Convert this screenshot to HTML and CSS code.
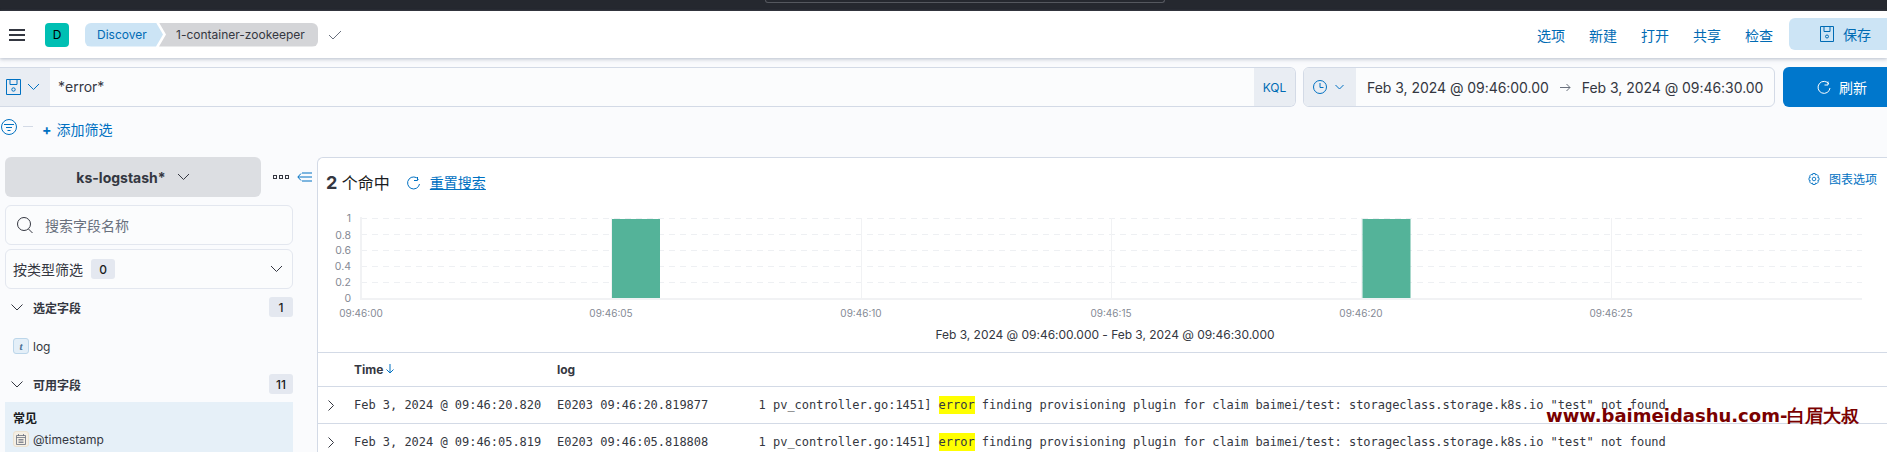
FILE: index.html
```html
<!DOCTYPE html>
<html lang="zh">
<head>
<meta charset="utf-8">
<title>Discover - Elastic</title>
<link rel="stylesheet" href="styles.css">
</head>
<body>
<div class="strip"><div class="urlbar"></div></div>
<header class="header">
  <button class="burger" aria-label="menu"><span></span><span></span><span></span></button>
  <div class="avatar">D</div>
  <nav class="crumbs">
    <span class="crumb crumb-a">Discover</span>
    <span class="crumb crumb-b">1-container-zookeeper</span>
  </nav>
  <svg class="check" width="14" height="10" viewBox="0 0 14 10"><path d="M1 5l4 4 8-8" fill="none" stroke="#69707d" stroke-width="1"/></svg>
  <div class="top-links">
    <a>选项</a><a>新建</a><a>打开</a><a>共享</a><a>检查</a>
  </div>
  <div class="save-btn">
    <svg width="14" height="16" viewBox="0 0 14 16"><g fill="none" stroke="#006bb4"><path d="M.5.5h13v15H.5z"/><path d="M4 .5v5h6v-5"/><circle cx="7" cy="10.5" r="1.5"/></g></svg>
    <span>保存</span>
  </div>
</header>

<section class="query-row">
  <div class="query">
    <div class="q-pre">
      <svg width="15" height="16" viewBox="0 0 15 16"><g fill="none" stroke="#0071c2"><path d="M.5.5h14v15H.5z"/><path d="M4 .5v5h7v-5"/><circle cx="7.500" cy="10.500" r="1.700"/></g></svg>
      <svg width="13" height="8" viewBox="0 0 13 8"><path d="M1 1l5.500 5.500L12 1" fill="none" stroke="#0071c2"/></svg>
    </div>
    <div class="q-input">*error*</div>
    <div class="q-kql">KQL</div>
  </div>
  <div class="dates">
    <div class="d-pre">
      <svg width="14" height="14" viewBox="0 0 14 14"><g fill="none" stroke="#0071c2"><circle cx="7" cy="7" r="6.500"/><path d="M7 3v4.500h3.500"/></g></svg>
      <svg width="9" height="6" viewBox="0 0 9 6"><path d="M.5 1l4 4 4-4" fill="none" stroke="#0071c2"/></svg>
    </div>
    <span class="d-text">Feb 3, 2024 @ 09:46:00.00</span>
    <svg class="d-arrow" width="11" height="9" viewBox="0 0 11 9"><path d="M0 4.500h10M6.500 1l3.500 3.500L6.500 8" fill="none" stroke="#69707d"/></svg>
    <span class="d-text">Feb 3, 2024 @ 09:46:30.00</span>
  </div>
  <div class="refresh">
    <svg width="14" height="15" viewBox="0 0 14 15"><path d="M11 1.500v3.500h-3.500M12 4A6 6 0 1 0 13 8" fill="none" stroke="#fff"/></svg>
    <span>刷新</span>
  </div>
</section>

<section class="filter-row">
  <svg class="f-icon" width="16" height="16" viewBox="0 0 16 16"><g fill="none" stroke="#0071c2"><circle cx="8" cy="8" r="7.500"/><path d="M3 5.500h10M5 8.500h6M6.500 11.500h3"/></g></svg>
  <span class="f-dash"></span>
  <a class="f-add"><b>+</b> 添加筛选</a>
</section>

<div class="content">
  <aside class="sidebar">
    <div class="index-row">
      <div class="index-btn"><span>ks-logstash*</span>
        <svg width="13" height="8" viewBox="0 0 13 8"><path d="M1 1l5.500 5.500L12 1" fill="none" stroke="#343741"/></svg>
      </div>
      <div class="dots"><i></i><i></i><i></i></div>
      <svg class="collapse" width="15" height="10" viewBox="0 0 15 10"><path d="M15 1H5M15 5H1M15 9H5M4 1.500L.8 5 4 8.500" fill="none" stroke="#0071c2"/></svg>
    </div>
    <div class="box search-box">
      <svg width="16" height="16" viewBox="0 0 16 16"><g fill="none" stroke="#343741"><circle cx="7" cy="7" r="6.500"/><path d="M11.500 12l4 4"/></g></svg>
      <span>搜索字段名称</span>
    </div>
    <div class="box type-box">
      <span>按类型筛选</span><span class="badge badge-0">0</span>
      <svg class="push" width="13" height="8" viewBox="0 0 13 8"><path d="M1 1l5.500 5.500L12 1" fill="none" stroke="#343741"/></svg>
    </div>
    <div class="group group-sel">
      <svg width="12" height="7" viewBox="0 0 12 7"><path d="M.5.500l5.500 5.500 5.500-5.500" fill="none" stroke="#343741"/></svg>
      <span class="g-title">选定字段</span><span class="badge push">1</span>
    </div>
    <div class="field field-log"><span class="ftype ftype-t">t</span><span>log</span></div>
    <div class="group group-av">
      <svg width="12" height="7" viewBox="0 0 12 7"><path d="M.5.500l5.500 5.500 5.500-5.500" fill="none" stroke="#343741"/></svg>
      <span class="g-title">可用字段</span><span class="badge push">11</span>
    </div>
    <div class="common">
      <div class="common-title">常见</div>
      <div class="field"><span class="ftype ftype-d">
        <svg width="10" height="11" viewBox="0 0 10 11"><g fill="none" stroke="#69707d" stroke-width=".8"><path d="M.5 1.500h9v9h-9zM.5 3.500h9M2.500 0v2M7.500 0v2M2.500 5.500h5M2.500 7h5M2.500 8.500h5"/></g></svg>
      </span><span>@timestamp</span></div>
    </div>
  </aside>

  <main class="main">
    <div class="hits-row">
      <span class="hits"><b>2</b> 个命中</span>
      <svg class="reset-icon" width="13" height="14" viewBox="0 0 13 14"><path d="M10.500 1v3.500H7M11.500 3.500A6 6 0 1 0 12.500 8" fill="none" stroke="#0071c2"/></svg>
      <a class="reset">重置搜索</a>
      <a class="chart-opt">
        <svg width="12" height="12" viewBox="0 0 12 12"><g fill="none" stroke="#0071c2" stroke-width=".9"><path d="M4.800.5h2.400l.3 1.500 1.400-.6 1.600 1.700-.9 1.200 1.400.5v2.400l-1.400.5.900 1.200-1.600 1.700-1.400-.6-.3 1.500H4.800l-.3-1.500-1.400.6L1.500 8.900l.9-1.200L1 7.200V4.800l1.400-.5-.9-1.200 1.600-1.700 1.400.6z"/><circle cx="6" cy="6" r="1.800"/></g></svg>
        <span>图表选项</span>
      </a>
    </div>
    <svg class="chart" width="1569" height="144" viewBox="318 208 1569 144">
      <g class="grid">
        <path d="M361 218.500H1862M361 234.500H1862M361 250.500H1862M361 266.500H1862M361 282.500H1862"/>
      </g>
      <path class="ticks" d="M611.500 218V298M861.500 218V298M1111.500 218V298M1361.500 218V298M1611.500 218V298"/>
      <path class="axis" d="M361 217V299H1862"/>
      <rect class="bar" x="612" y="219" width="48" height="79"/>
      <rect class="bar" x="1362.500" y="219" width="48" height="79"/>
      <g class="ylab">
        <text x="351" y="222">1</text>
        <text x="351" y="238.500">0.8</text>
        <text x="351" y="254">0.6</text>
        <text x="351" y="270">0.4</text>
        <text x="351" y="286">0.2</text>
        <text x="351" y="301.500">0</text>
      </g>
      <g class="xlab">
        <text x="361" y="317">09:46:00</text>
        <text x="611" y="317">09:46:05</text>
        <text x="861" y="317">09:46:10</text>
        <text x="1111" y="317">09:46:15</text>
        <text x="1361" y="317">09:46:20</text>
        <text x="1611" y="317">09:46:25</text>
      </g>
      <text class="xtitle" x="1105" y="339">Feb 3, 2024 @ 09:46:00.000 - Feb 3, 2024 @ 09:46:30.000</text>
    </svg>
    <div class="t-row t-head">
      <span class="c-exp"></span>
      <span class="c-time">Time
        <svg width="8" height="10" viewBox="0 0 8 10"><path d="M4 0v9M.5 5.500L4 9l3.500-3.500" fill="none" stroke="#0071c2"/></svg>
      </span>
      <span class="c-log">log</span>
    </div>
    <div class="t-row t-data">
      <span class="c-exp"><svg width="6" height="11" viewBox="0 0 6 11"><path d="M.5.500l5 5-5 5" fill="none" stroke="#343741"/></svg></span>
      <span class="c-time">Feb 3, 2024 @ 09:46:20.820</span>
      <span class="c-log">E0203 09:46:20.819877       1 pv_controller.go:1451] <mark>error</mark> finding provisioning plugin for claim baimei/test: storageclass.storage.k8s.io "test" not found</span>
    </div>
    <div class="t-row t-data">
      <span class="c-exp"><svg width="6" height="11" viewBox="0 0 6 11"><path d="M.5.500l5 5-5 5" fill="none" stroke="#343741"/></svg></span>
      <span class="c-time">Feb 3, 2024 @ 09:46:05.819</span>
      <span class="c-log">E0203 09:46:05.818808       1 pv_controller.go:1451] <mark>error</mark> finding provisioning plugin for claim baimei/test: storageclass.storage.k8s.io "test" not found</span>
    </div>
  </main>
</div>
<div class="watermark">www.baimeidashu.com-白眉大叔</div>
</body>
</html>
```
FILE: styles.css
```css
* { box-sizing: border-box; }
html, body { margin: 0; padding: 0; height: 452px; overflow: hidden; }
body {
  position: relative;
  background: #fafbfd;
  color: #343741;
  font-family: Inter, "Noto Sans CJK SC", sans-serif;
  font-size: 14px;
}
a { color: #006bb4; }

.strip { height: 11px; background: #25282f; }
.urlbar {
  width: 400px; height: 3px; margin-left: 765px;
  border: 1px solid #55585f; border-top: 0; border-radius: 0 0 3px 3px;
}

.header {
  height: 47px; background: #fff; display: flex; align-items: center;
  padding-left: 9px;
  box-shadow: 0 1px 3px rgba(152,162,179,.5), 0 2px 5px rgba(152,162,179,.2);
  position: relative;
}
.burger {
  width: 16px; height: 12px; padding: 0; border: 0; background: none;
  display: flex; flex-direction: column; justify-content: space-between;
}
.burger span { display: block; height: 2px; background: #343741; }
.avatar {
  width: 24px; height: 24px; margin-left: 20px; border-radius: 4px;
  background: #00bfb3; color: #000; font-size: 12px;
  display: flex; align-items: center; justify-content: center;
}
.crumbs { display: flex; margin-left: 16px; font-size: 12px; }
.crumb { height: 24px; display: flex; align-items: center; }
.crumb-a {
  width: 78px; padding-left: 12px; background: #cce4f5; color: #006bb4;
  border-radius: 6px 0 0 6px;
  clip-path: polygon(0 0, 71px 0, 78px 50%, 71px 100%, 0 100%);
}
.crumb-b {
  width: 159px; margin-left: -4px; padding-left: 17px; background: #d4d5d8; color: #343741;
  border-radius: 0 6px 6px 0;
  clip-path: polygon(0 0, 100% 0, 100% 100%, 0 100%, 7px 50%);
}
.check { margin-left: 10px; }
.top-links { margin-left: auto; display: flex; gap: 24px; font-size: 14px; }
.save-btn {
  margin-left: 16px; width: 98px; height: 32px; margin-top: -2px;
  background: #cce4f5; color: #006bb4; border-radius: 6px 0 0 6px;
  display: flex; align-items: center; padding-left: 31px; gap: 9px;
}

.query-row { display: flex; margin-top: 9px; height: 40px; }
.query {
  width: 1296px; display: flex; background: #fbfcfd;
  border: 1px solid #d3dae6; border-left: 0; border-radius: 0 6px 6px 0;
  overflow: hidden;
}
.q-pre {
  width: 50px; background: #e9edf3; display: flex; align-items: center;
  padding-left: 6px; gap: 6px;
}
.q-input { flex: 1; padding-left: 8px; line-height: 38px; font-size: 14px; }
.q-kql {
  width: 41px; background: #e9edf3; color: #006bb4; font-size: 12px;
  display: flex; align-items: center; justify-content: center;
}
.dates {
  width: 472px; margin-left: 7px; display: flex; align-items: center;
  background: #fbfcfd; border: 1px solid #d3dae6; border-radius: 6px; overflow: hidden;
}
.d-pre {
  width: 52px; height: 100%; background: #e9edf3; display: flex; align-items: center;
  padding-left: 9px; gap: 8px; margin-right: 11px;
}
.d-arrow { margin: 0 11px; }
.d-text { font-size: 14px; white-space: nowrap; letter-spacing: -.04px; }
.refresh {
  margin-left: 8px; flex: 1; background: #0077cc; color: #fff; border-radius: 6px 0 0 6px;
  display: flex; align-items: center; padding-left: 34px; gap: 8px;
}

.filter-row { display: flex; height: 50px; align-items: flex-start; padding-left: 1px; }
.f-icon { margin-top: 12px; }
.f-dash { width: 10px; height: 1px; background: #d3dae6; margin: 19px 0 0 6px; }
.f-add { margin: 13px 0 0 9px; font-size: 14px; line-height: 20px; color: #0071c2; }
.f-add b { font-weight: 700; margin-right: 1px; }

.content { display: flex; height: 295px; }
.sidebar { width: 317px; flex: none; padding-left: 5px; }
.index-row { display: flex; align-items: center; height: 40px; }
.index-btn {
  width: 256px; height: 40px; background: #dcdee2; border-radius: 6px;
  display: flex; align-items: center; justify-content: center; gap: 11px;
  font-weight: 700; font-size: 14px;
}
.dots { display: flex; gap: 2px; margin: 0 9px 0 12px; }
.dots i { width: 4px; height: 4px; border: 1px solid #343741; display: block; }
.collapse { margin-left: -1px; }
.box {
  width: 288px; height: 40px; background: #fbfcfd; border: 1px solid #e3e7ef; border-radius: 6px;
  display: flex; align-items: center;
}
.search-box { margin-top: 8px; padding-left: 11px; gap: 12px; color: #69707d; }
.type-box { margin-top: 4px; padding: 0 9px 0 7px; }
.badge {
  height: 20px; min-width: 24px; padding: 0 4px; background: #e4e8f0; border-radius: 3px;
  display: flex; align-items: center; justify-content: center; font-size: 12px; font-weight: 500; color: #1a1c21;
}
.badge-0 { margin-left: 8px; }
.push { margin-left: auto; }
.group { width: 288px; height: 20px; display: flex; align-items: center; padding-left: 6px; }
.group-sel { margin-top: 8px; }
.group-av { margin-top: 20px; }
.g-title { margin-left: 10px; font-size: 12px; font-weight: 700; }
.field { display: flex; align-items: center; gap: 4px; font-size: 12px; height: 16px; padding-left: 8px; }
.field-log { margin-top: 21px; }
.ftype {
  width: 16px; height: 16px; border-radius: 3px; display: flex; align-items: center; justify-content: center;
}
.ftype-t {
  background: #e4eff8; border: 1px solid #bcd6ea; color: #4a7194;
  font-family: "Liberation Serif", serif; font-style: italic; font-weight: 700; font-size: 11px;
}
.ftype-d { background: #f5efe4; border: 1px solid #ece2d0; }
.common { width: 288px; height: 50px; margin-top: 8px; background: #e6f0f8; padding-top: 9px; }
.common-title { font-size: 12px; font-weight: 700; line-height: 16px; padding-left: 8px; margin-bottom: 4px; color: #1a1c21; }

.main {
  flex: 1; background: #fff; border: 1px solid #d3dae6; border-width: 1px 0 0 1px;
  border-top-left-radius: 6px; overflow: hidden;
}
.hits-row { height: 50px; display: flex; align-items: flex-start; padding: 15px 10px 0 8px; }
.hits { font-size: 16px; line-height: 20px; color: #1a1c21; }
.hits b { font-size: 18px; font-weight: 700; color: #343741; }
.reset-icon { margin: 3px 0 0 17px; }
.reset { margin-left: 10px; font-size: 14px; line-height: 20px; text-decoration: underline; color: #0071c2; }
.chart-opt { margin-left: auto; margin-top: -3px; display: flex; align-items: center; gap: 9px; font-size: 12px; color: #0071c2; }

.chart { display: block; }
.grid path { stroke: #eef0f3; stroke-dasharray: 6 5; fill: none; }
.ticks { stroke: #f1f2f4; fill: none; }
.axis { stroke: #f1f2f4; stroke-width: 2; fill: none; }
.bar { fill: #54b399; }
.ylab text { text-anchor: end; font-size: 10.5px; fill: #858a95; }
.xlab text { text-anchor: middle; font-size: 10px; fill: #858a95; }
.xtitle { text-anchor: middle; font-size: 12px; letter-spacing: -.03px; fill: #343741; }

.t-row { display: flex; border-top: 1px solid #d3dae6; font-size: 12px; }
.t-head { height: 34px; align-items: center; font-weight: 700; }
.t-data { height: 37px; align-items: center; font-family: "DejaVu Sans Mono", monospace; white-space: pre; letter-spacing: -.025px; }
.c-exp { width: 36px; flex: none; padding-left: 10px; display: flex; }
.c-time { width: 203px; flex: none; }
.c-log { flex: 1; }
mark { background: #ff0; color: #343741; padding: 2px 0; }

.watermark {
  position: absolute; left: 1546px; top: 405px;
  font-family: "DejaVu Sans", sans-serif; font-weight: 700; font-size: 18px; line-height: 22px;
  color: #7a0000; white-space: nowrap;
}
```
